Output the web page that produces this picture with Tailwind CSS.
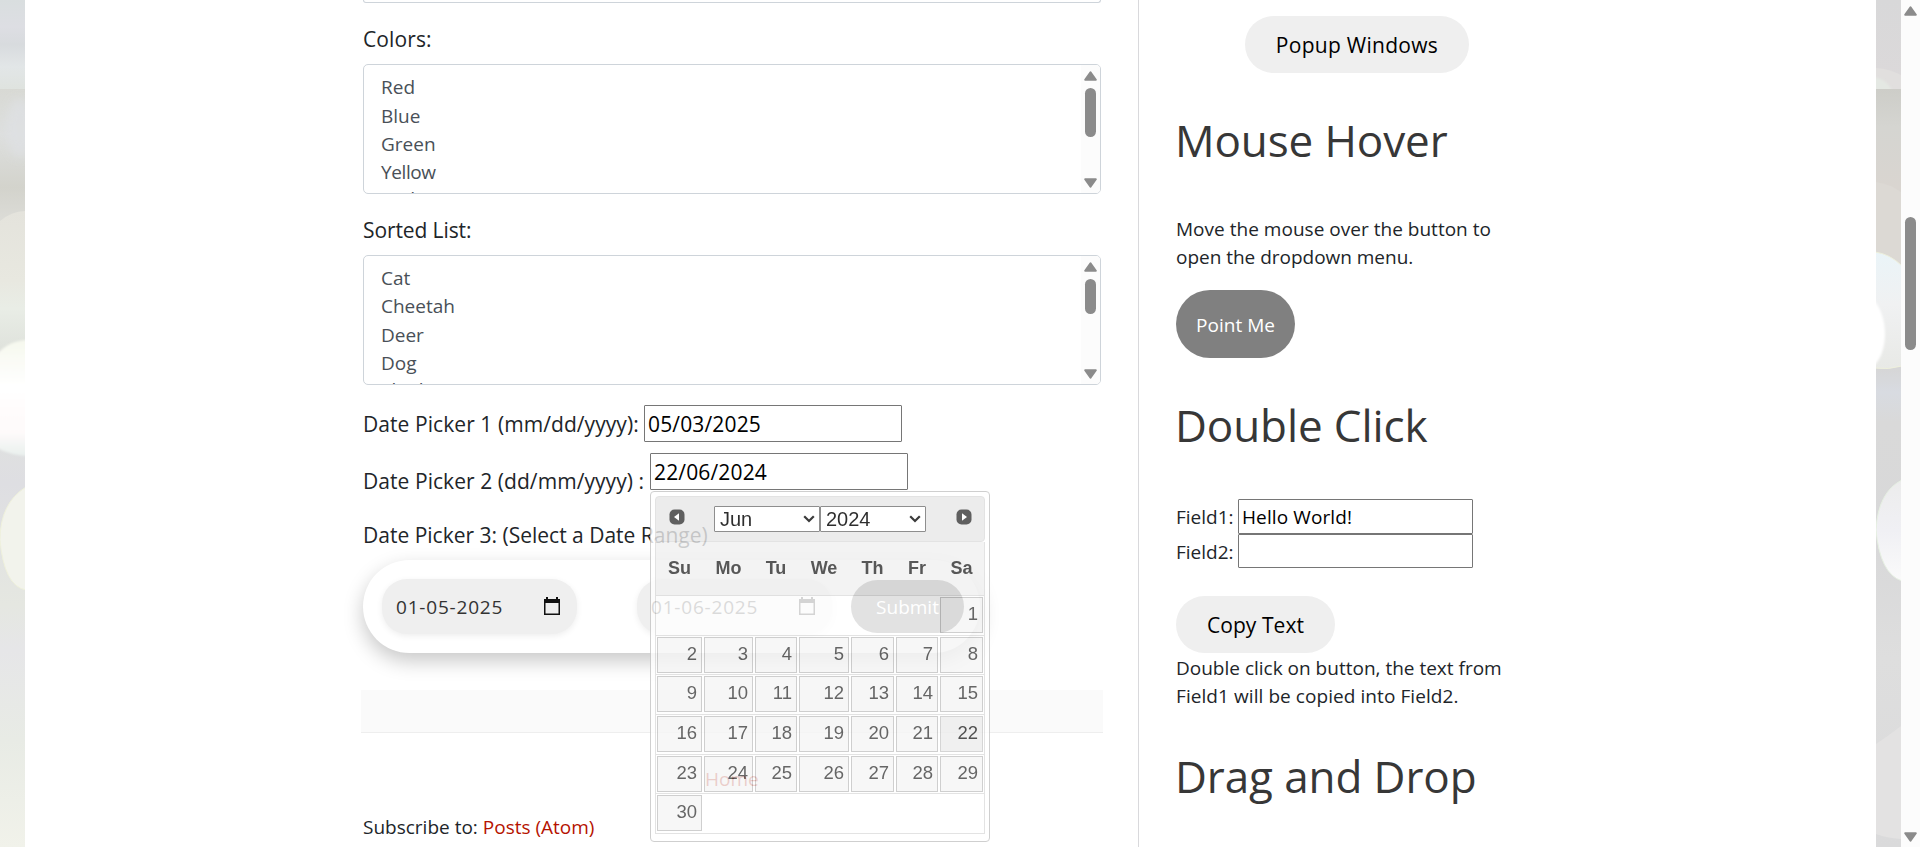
<!DOCTYPE html>
<html lang="en">
<head>
<meta charset="utf-8">
<title>Automation Testing Practice</title>
<script src="https://cdn.jsdelivr.net/npm/@tailwindcss/browser@4"></script>
</head>
<body class="bg-white font-['Open_Sans','Noto_Sans',sans-serif] text-[#212529] overflow-hidden">
<div class="flex h-[847px] w-[1920px] overflow-hidden">

  <!-- left backdrop strip -->
  <svg class="w-[25px] h-[847px] shrink-0" viewBox="0 0 25 847" preserveAspectRatio="none">
    <defs>
      <linearGradient id="la" x1="0" y1="0" x2="0" y2="1"><stop offset="0" stop-color="#d9dedf"/><stop offset=".3" stop-color="#dddee3"/><stop offset=".5" stop-color="#d8dbde"/><stop offset=".75" stop-color="#e2e6e7"/><stop offset="1" stop-color="#dfe3df"/></linearGradient>
      <linearGradient id="lb" x1="0" y1="89" x2="0" y2="847" gradientUnits="userSpaceOnUse"><stop offset="0" stop-color="#d8d9d4"/><stop offset=".06" stop-color="#dddfde"/><stop offset=".13" stop-color="#d3d3cc"/><stop offset=".17" stop-color="#dbdbd6"/><stop offset=".47" stop-color="#dfe0e0"/><stop offset=".52" stop-color="#dedee2"/><stop offset=".68" stop-color="#e5e7e1"/><stop offset=".74" stop-color="#e6e6e8"/><stop offset=".86" stop-color="#e8ebe5"/><stop offset="1" stop-color="#f1f2ea"/></linearGradient>
      <linearGradient id="lc" x1="0" y1="0" x2="0" y2="1"><stop offset="0" stop-color="#e4e3dc"/><stop offset=".5" stop-color="#e8e8e0"/><stop offset=".7" stop-color="#e9ede6"/><stop offset="1" stop-color="#dfe2dc"/></linearGradient>
      <linearGradient id="ld" x1="0" y1="0" x2="0" y2="1"><stop offset="0" stop-color="#f6f8ee"/><stop offset=".4" stop-color="#ffffff"/><stop offset=".8" stop-color="#fefafa"/><stop offset="1" stop-color="#e9f0ee"/></linearGradient>
      <filter id="lf" x="-50%" y="-20%" width="200%" height="140%"><feGaussianBlur stdDeviation="1"/></filter>
      <filter id="lg" x="-60%" y="-30%" width="220%" height="160%"><feGaussianBlur stdDeviation="4"/></filter>
    </defs>
    <rect width="25" height="89" fill="url(#la)"/>
    <rect y="89" width="25" height="758" fill="url(#lb)"/>
    <ellipse cx="20" cy="128" rx="14" ry="30" fill="#dfe1e4" opacity=".7" filter="url(#lg)"/>
    <path d="M0 221Q12 211 27 211V350H0Z" fill="url(#lc)"/>
    <path d="M-3 354Q10 340 28 340V456Q10 455 -3 448Z" fill="url(#ld)" filter="url(#lf)"/>
    <path d="M26 487Q0 503 0 540Q4 586 26 590Z" fill="#f2f3ec" stroke="#eff1dc"/>
  </svg>

  <main class="flex w-[1851px] shrink-0 bg-white">

    <!-- form column -->
    <section class="w-[1114px] shrink-0 border-r border-[#d9d9dc] pl-[338px] pr-[37px]">
      <div class="h-[3px] w-[738px] rounded-b-[4px] border border-t-0 border-[#ced4da]"></div>

      <div class="mt-5 text-[21px] leading-[33px] tracking-[0.1px]">Colors:</div>
      <div class="mt-[8px] flex h-[130px] w-[738px] overflow-hidden rounded-[5px] border border-[#ced4da]">
        <div class="flex-1 pt-2 pl-[17px] text-[19px] leading-[28.3px] text-[#495057]">
          <div>Red</div><div class="pt-px -mb-px">Blue</div><div>Green</div><div class="tracking-[-0.4px]">Yellow</div><div class="-mt-px">Red</div>
        </div>
        <div class="flex w-[19px] flex-col items-center bg-[#fcfcfc] pt-[6px] pb-[5px]">
          <svg class="h-[10px] w-[13px]" viewBox="0 0 13 10"><path d="M6.500 1.200L11.800 8.800H1.200Z" fill="#8b8b8b" stroke="#8b8b8b" stroke-width="2" stroke-linejoin="round"/></svg>
          <div class="mt-[7px] h-[49px] w-[11px] rounded-full bg-[#8b8b8b]"></div>
          <svg class="mt-auto h-[10px] w-[13px]" viewBox="0 0 13 10"><path d="M6.500 8.800L11.800 1.200H1.200Z" fill="#8b8b8b" stroke="#8b8b8b" stroke-width="2" stroke-linejoin="round"/></svg>
        </div>
      </div>

      <div class="mt-5 text-[21px] leading-[33px] tracking-[-0.1px]">Sorted List:</div>
      <div class="mt-[8px] flex h-[130px] w-[738px] overflow-hidden rounded-[5px] border border-[#ced4da]">
        <div class="flex-1 pt-2 pl-[17px] text-[19px] leading-[28.3px] text-[#495057]">
          <div>Cat</div><div>Cheetah</div><div>Deer</div><div>Dog</div><div class="-mt-px">Elephant</div>
        </div>
        <div class="flex w-[19px] flex-col items-center bg-[#fcfcfc] pt-[6px] pb-[5px]">
          <svg class="h-[10px] w-[13px]" viewBox="0 0 13 10"><path d="M6.500 1.200L11.800 8.800H1.200Z" fill="#8b8b8b" stroke="#8b8b8b" stroke-width="2" stroke-linejoin="round"/></svg>
          <div class="mt-[7px] h-[35px] w-[11px] rounded-full bg-[#8b8b8b]"></div>
          <svg class="mt-auto h-[10px] w-[13px]" viewBox="0 0 13 10"><path d="M6.500 8.800L11.800 1.200H1.200Z" fill="#8b8b8b" stroke="#8b8b8b" stroke-width="2" stroke-linejoin="round"/></svg>
        </div>
      </div>

      <div class="mt-5 flex h-[37px] text-[21px] leading-[39px]">
        <div class="w-[281px] whitespace-nowrap tracking-[0.07px]">Date Picker 1 (mm/dd/yyyy):</div>
        <div class="h-[37px] w-[258px] rounded-[1px] border border-[#767676] bg-white pl-[3px] leading-[37px] tracking-[0.15px] text-black">05/03/2025</div>
      </div>

      <div class="mt-[11px] flex h-[46px] text-[21px]">
        <div class="mt-[9px] w-[287px] whitespace-nowrap leading-[39px] tracking-[0.06px]">Date Picker 2 (dd/mm/yyyy) :</div>
        <div class="relative h-[37px] w-[258px]">
          <div class="h-[37px] rounded-[1px] border border-[#767676] bg-white pl-[3px] leading-[37px] tracking-[0.15px] text-black">22/06/2024</div>

          <!-- calendar popup, mid fade -->
          <div class="absolute top-[38px] left-0 z-10 h-[351px] w-[340px] rounded-[4px] border border-[#c5c5c5] bg-white p-1 font-['Liberation_Sans',Arial,sans-serif] text-[#333] opacity-[.82]">
            <div class="flex h-[46px] w-[330px] items-start rounded-[4px] border border-[#ddd] bg-[#e9e9e9] pl-[13px]">
              <svg class="mt-[12px] size-[16px]" viewBox="0 0 16 16"><rect x=".5" y=".5" width="15" height="15" rx="5" fill="#3d3d3d"/><path d="M10 4.300V11.700L5 8Z" fill="#fff"/></svg>
              <div class="mt-[9px] ml-[29px] flex h-[26px] w-[106px] items-center rounded-[1px] border border-[#767676] bg-white pr-[4px] pl-[5px] text-[20px] leading-[22px] text-black">Jun
                <svg class="ml-auto h-[8px] w-[12px]" viewBox="0 0 12 8"><path d="M1.200 1.200L6 6L10.800 1.200" fill="none" stroke="#111" stroke-width="2.200"/></svg>
              </div>
              <div class="mt-[9px] flex h-[26px] w-[106px] items-center rounded-[1px] border border-[#767676] bg-white pr-[4px] pl-[5px] text-[20px] leading-[22px] text-black">2024
                <svg class="ml-auto h-[8px] w-[12px]" viewBox="0 0 12 8"><path d="M1.200 1.200L6 6L10.800 1.200" fill="none" stroke="#111" stroke-width="2.200"/></svg>
              </div>
              <svg class="mt-[12px] ml-[30px] size-[16px]" viewBox="0 0 16 16"><rect x=".5" y=".5" width="15" height="15" rx="5" fill="#3d3d3d"/><path d="M6 4.300V11.700L11 8Z" fill="#fff"/></svg>
            </div>
            <div class="w-[330px] border-x border-[#ddd]">
              <div class="grid h-[54px] grid-cols-[45px_49px_42px_50px_43px_42px_43px] gap-[2px] border-b border-[#ddd] bg-[#f1f1f1] pl-[1px] text-center text-[18px] leading-[53px] font-bold">
                <div>Su</div><div>Mo</div><div>Tu</div><div>We</div><div>Th</div><div>Fr</div><div>Sa</div>
              </div>
              <div id="days" class="text-right text-[18.5px] leading-[32px] text-[#454545]"></div>
            </div>
          </div>
        </div>
      </div>

      <div class="mt-5 text-[21px] leading-[33px]">Date Picker 3: (Select a Date Range)</div>

      <div class="mt-[8px] flex h-[93px] w-[617px] items-center rounded-full bg-white pl-[19px] text-[19px] text-[#333] shadow-[0_8px_20px_rgba(0,0,0,0.22)]">
        <div class="flex h-[55px] w-[195px] items-center rounded-[25px] bg-[#efefef] pr-[17px] pl-[14px] leading-[55px] tracking-[0.8px] shadow-[0_2px_6px_rgba(0,0,0,0.07)]"><span class="pt-px">01-05-2025</span>
          <svg class="mb-px ml-auto h-[18px] w-[16px]" viewBox="0 0 16 18"><path d="M2 0H4V2H12V0H14V2H16V18H0V2H2ZM1.500 6V16.500H14.500V6Z" fill="#111" fill-rule="evenodd"/></svg>
        </div>
        <div class="ml-[60px] flex h-[55px] w-[195px] items-center rounded-[25px] bg-[#efefef] pr-[17px] pl-[14px] leading-[55px] tracking-[0.8px] shadow-[0_2px_6px_rgba(0,0,0,0.07)]"><span class="pt-px">01-06-2025</span>
          <svg class="mb-px ml-auto h-[18px] w-[16px]" viewBox="0 0 16 18"><path d="M2 0H4V2H12V0H14V2H16V18H0V2H2ZM1.500 6V16.500H14.500V6Z" fill="#111" fill-rule="evenodd"/></svg>
        </div>
        <div class="ml-[19px] h-[53px] w-[113px] rounded-full bg-[#5e5e5e] text-center leading-[55px] text-white">Submit</div>
      </div>

      <div class="mt-[37px] -ml-[2px] h-[43px] w-[742px] border-b border-[#eee] bg-[#fafafa]"></div>
      <div class="mt-8 pl-[342px] text-[19px] leading-[28px] text-[#b51200]">Home</div>
      <div class="mt-5 text-[19px] leading-[28px]">Subscribe to: <span class="text-[#b51200]">Posts (Atom)</span></div>
    </section>

    <!-- sidebar -->
    <aside class="flex-1 pt-4 pl-[37px] text-[19px] leading-[28px]">
      <div class="ml-[69px] h-[57px] w-[224px] rounded-full bg-[#efefef] text-center text-[21px] leading-[59px] tracking-[0.28px] text-black">Popup Windows</div>
      <h2 class="mt-[37px] -ml-[1px] text-[44px] leading-[60px] tracking-[-0.1px] text-[#373737]">Mouse Hover</h2>
      <p class="mt-[45px] tracking-[0.02px]">Move the mouse over the button to<br><span class="tracking-[-0.02px]">open the dropdown menu.</span></p>
      <div class="mt-[19px] h-[68px] w-[119px] rounded-full bg-[#808080] text-center leading-[70px] text-white">Point Me</div>
      <h2 class="mt-[37px] -ml-[1px] text-[44px] leading-[60px] tracking-[-0.1px] text-[#373737]">Double Click</h2>
      <div class="mt-[44px] flex h-[35px] leading-[37px]">
        <div class="w-[62px]">Field1:</div>
        <div class="h-[35px] w-[235px] rounded-[1px] border border-[#767676] pl-[3px] leading-[35px] tracking-[0.1px] text-black">Hello World!</div>
      </div>
      <div class="flex h-[34px] leading-[37px]">
        <div class="w-[62px]">Field2:</div>
        <div class="h-[34px] w-[235px] rounded-[1px] border border-[#767676]"></div>
      </div>
      <div class="mt-[28px] h-[57px] w-[159px] rounded-full bg-[#efefef] text-center text-[21px] leading-[59px] tracking-[0.08px] text-black">Copy Text</div>
      <p class="mt-[1px]">Double click on button, the text from<br><span class="tracking-[0.07px]">Field1 will be copied into Field2.</span></p>
      <h2 class="mt-[36px] -ml-[1px] text-[44px] leading-[60px] tracking-[-0.1px] text-[#373737]">Drag and Drop</h2>
    </aside>
  </main>

  <!-- right backdrop strip -->
  <svg class="w-[25px] h-[847px] shrink-0" viewBox="0 0 25 847" preserveAspectRatio="none">
    <defs>
      <linearGradient id="ra" x1="0" y1="0" x2="0" y2="1"><stop offset="0" stop-color="#d8d8d9"/><stop offset="1" stop-color="#dcd9da"/></linearGradient>
      <linearGradient id="rb" x1="0" y1="89" x2="0" y2="847" gradientUnits="userSpaceOnUse"><stop offset="0" stop-color="#cdcdc8"/><stop offset=".05" stop-color="#d5d5d1"/><stop offset=".13" stop-color="#d9d5d0"/><stop offset=".37" stop-color="#d6d6d7"/><stop offset=".4" stop-color="#d8dbe1"/><stop offset=".44" stop-color="#d9d9d9"/><stop offset=".6" stop-color="#d8d8d9"/><stop offset=".75" stop-color="#dedede"/><stop offset="1" stop-color="#dadadb"/></linearGradient>
      <linearGradient id="rc" x1="0" y1="0" x2="0" y2="1"><stop offset="0" stop-color="#eaf4f8"/><stop offset=".45" stop-color="#f0f1f2"/><stop offset="1" stop-color="#e8e9e6"/></linearGradient>
      <linearGradient id="rd" x1="0" y1="0" x2="0" y2="1"><stop offset="0" stop-color="#ececec"/><stop offset=".5" stop-color="#f0f0f4"/><stop offset="1" stop-color="#fafafa"/></linearGradient>
      <filter id="rf" x="-50%" y="-20%" width="200%" height="140%"><feGaussianBlur stdDeviation="1.200"/></filter>
    </defs>
    <rect width="25" height="89" fill="url(#ra)"/>
    <path d="M0 68Q14 69 25 75V89H0Z" fill="#e1dfde"/>
    <path d="M-3 77Q12 79 17 93H-3Z" fill="#e4e8e3" filter="url(#rf)"/>
    <rect y="89" width="25" height="758" fill="url(#rb)"/>
    <path d="M0 182Q14 184 25 192V270H0Z" fill="#dcd9d4"/>
    <path d="M-1 252Q14 254 26 266V366Q12 370 -1 368Z" fill="url(#rc)" stroke="#eef0dc"/>
    <path d="M-4 298Q9 312 9 335Q8 358 -4 367Z" fill="#fff" filter="url(#rf)"/>
    <path d="M26 480Q2 492 0 530Q4 574 26 581Z" fill="url(#rd)" stroke="#e6f0e2"/>
    <path d="M0 744Q12 736 25 726V839Q10 838 0 834Z" fill="#e3e2e2"/>
  </svg>

  <!-- window scrollbar -->
  <div class="flex w-[19px] shrink-0 flex-col items-center bg-[#fcfcfc] pt-[6px] pb-[5px]">
    <svg class="h-[10px] w-[13px]" viewBox="0 0 13 10"><path d="M6.500 1.200L11.800 8.800H1.200Z" fill="#8b8b8b" stroke="#8b8b8b" stroke-width="2" stroke-linejoin="round"/></svg>
    <div class="mt-[201px] h-[133px] w-[11px] rounded-full bg-[#8b8b8b]"></div>
    <svg class="mt-auto h-[10px] w-[13px]" viewBox="0 0 13 10"><path d="M6.500 8.800L11.800 1.200H1.200Z" fill="#8b8b8b" stroke="#8b8b8b" stroke-width="2" stroke-linejoin="round"/></svg>
  </div>
</div>
<script>
  // June 2024 starts on a Saturday
  const days = document.getElementById('days');
  for (let week = 0; week < 6; week++) {
    const row = document.createElement('div');
    row.className = 'grid h-[39.7px] grid-cols-[45px_49px_42px_50px_43px_42px_43px] gap-[2px] border-b border-[#ddd] pt-[1px] pl-[1px]';
    for (let d = 0; d < 7; d++) {
      const n = week * 7 + d - 5;
      const cell = document.createElement('div');
      if (n >= 1 && n <= 30) {
        cell.className = n === 22
          ? 'h-[36px] border border-[#ccc] bg-[#ededed] pr-[4px] text-[#2b2b2b]'
          : 'h-[36px] border border-[#c5c5c5] bg-[#f6f6f6] pr-[4px]';
        cell.textContent = n;
      }
      row.appendChild(cell);
    }
    days.appendChild(row);
  }
</script>
</body>
</html>
